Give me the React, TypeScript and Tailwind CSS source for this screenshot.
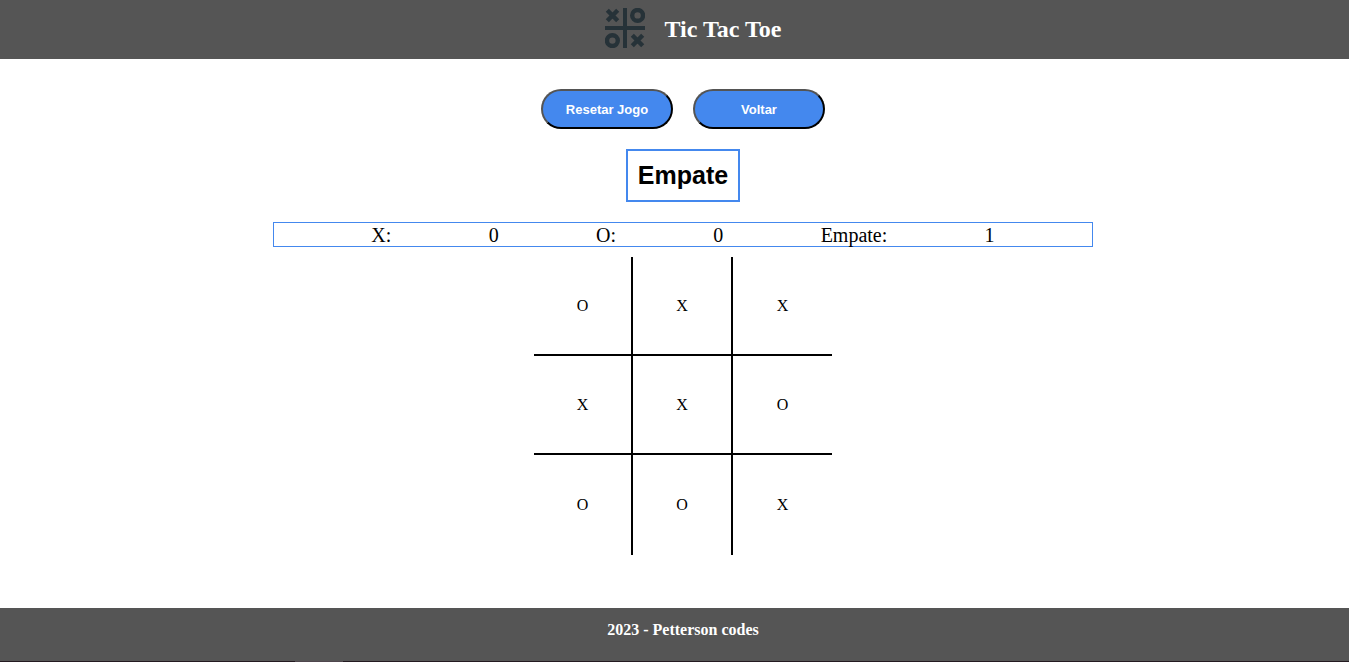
import { useState } from "react";

type Mark = "X" | "O" | "";

const finishedBoard: Mark[] = ["O", "X", "X", "X", "X", "O", "O", "O", "X"];

function Logo() {
  return (
    <svg
      viewBox="0 0 40 40"
      className="size-10"
      fill="none"
      stroke="#263238"
      strokeWidth="4"
      aria-hidden="true"
    >
      <path d="M20 0V40M0 20H40" />
      <path
        d="M2.3 2.3L12.7 12.7M12.7 2.3L2.3 12.7M27.3 27.3L37.7 37.7M37.7 27.3L27.3 37.7"
        strokeWidth="4.4"
      />
      <circle cx="32.6" cy="7.4" r="5.4" strokeWidth="4.4" />
      <circle cx="7.4" cy="32.6" r="5.4" strokeWidth="4.4" />
    </svg>
  );
}

function ActionButton({ label, onClick }: { label: string; onClick?: () => void }) {
  return (
    <button
      type="button"
      onClick={onClick}
      className="h-10 w-[132px] rounded-[20px] border-2 [border-style:outset] border-black bg-[#4488ee] pt-px font-['Liberation_Sans',Arial,sans-serif] text-[13px] font-bold text-white"
    >
      {label}
    </button>
  );
}

export default function App() {
  const [board, setBoard] = useState<Mark[]>(finishedBoard);
  const scores = [
    { name: "X:", value: 0 },
    { name: "O:", value: 0 },
    { name: "Empate:", value: 1 },
  ];

  return (
    <div className="flex min-h-screen flex-col bg-white font-['Liberation_Serif','Times_New_Roman',serif] text-black">
      <header className="flex items-center justify-center gap-5 bg-[#555555] pt-2 pb-[11px] pl-[37px]">
        <Logo />
        <h1 className="pt-0.5 text-2xl leading-7 font-bold text-white">Tic Tac Toe</h1>
      </header>

      <main className="flex grow flex-col items-center pt-[30px] pl-[17px]">
        <div className="flex gap-5">
          <ActionButton label="Resetar Jogo" onClick={() => setBoard(Array<Mark>(9).fill(""))} />
          <ActionButton label="Voltar" />
        </div>

        <h2 className="mt-5 border-2 border-[#4488ee] p-[10px] font-['Liberation_Sans',Arial,sans-serif] text-[25px] leading-[29px] font-bold">
          Empate
        </h2>

        <div className="mt-5 flex w-full max-w-[820px] justify-evenly border border-[#4488ee] pt-px text-[20px] leading-[22px]">
          {scores.flatMap(({ name, value }) => [
            <span key={name}>{name}</span>,
            <span key={name + "value"}>{value}</span>,
          ])}
        </div>

        <div className="mt-[10px] mb-[53px] grid grid-cols-[99px_100px_99px] grid-rows-[99px_99px_100px]">
          {board.map((mark, i) => (
            <button
              key={i}
              type="button"
              aria-label={`${i + 1} ${mark}`}
              className={`border-black text-base ${i % 3 < 2 ? "border-r-2" : ""} ${i < 6 ? "border-b-2" : ""}`}
            >
              {mark}
            </button>
          ))}
        </div>
      </main>

      <footer className="bg-[#555555] text-center text-base font-bold text-white">
        <p className="pt-[13px] pb-[22px] pl-[17px] leading-[18px]">2023 - Petterson codes</p>
        <div className="flex h-px bg-[#231a20] pl-[295px]">
          <div className="w-12 bg-[#4f474d]" />
        </div>
      </footer>
    </div>
  );
}
